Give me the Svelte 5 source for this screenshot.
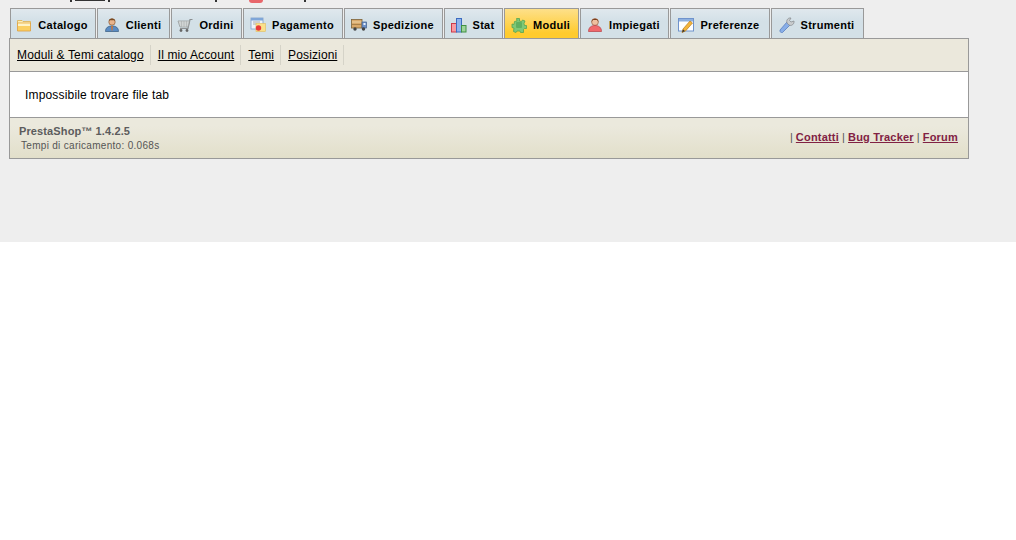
<script>
  const tabs = [
    { label: 'Catalogo', w: 86, icon: 'folder' },
    { label: 'Clienti', w: 73, icon: 'user' },
    { label: 'Ordini', w: 71, icon: 'cart' },
    { label: 'Pagamento', w: 100, icon: 'pay' },
    { label: 'Spedizione', w: 99, icon: 'truck' },
    { label: 'Stat', w: 59, icon: 'stat' },
    { label: 'Moduli', w: 75, icon: 'puzzle', active: true },
    { label: 'Impiegati', w: 89, icon: 'woman' },
    { label: 'Preferenze', w: 100, icon: 'pref' },
    { label: 'Strumenti', w: 93, icon: 'wrench' }
  ];
  const subs = ['Moduli & Temi catalogo', 'Il mio Account', 'Temi', 'Posizioni'];
</script>

<div class="page">
  <div class="sliver">
    <span class="mark one"></span>
    <span class="mark line"></span>
    <span class="mark four"></span>
    <span class="mark two"></span>
    <span class="dot"></span>
    <span class="mark three"></span>
  </div>
  <ul class="tabs">
    {#each tabs as t}
      <li class="tab" class:active={t.active} style="width:{t.w}px">
        <svg class="ico" viewBox="0 0 16 16" width="16" height="16">
          {#if t.icon === 'folder'}
            <path d="M1.500 3.500h4.500l1 1h7.500v2h-13z" fill="#fbeeb8" stroke="#dcae4c" stroke-width=".8"/>
            <path d="M1.500 6h13v8h-13z" fill="#fbd062" stroke="#e0a03c" stroke-width=".8"/>
            <path d="M2 6.500h12v2.500H2z" fill="#fef3c8"/>
          {:else if t.icon === 'user'}
            <circle cx="8" cy="5" r="3.200" fill="#e9b48c" stroke="#8a5a35" stroke-width=".7"/>
            <path d="M4.800 4C5.500 .8 10.500 .8 11.200 4L10 3.200H6z" fill="#7a4a22"/>
            <path d="M1.500 14.500c0-3.800 2.500-5.500 6.500-5.500s6.500 1.700 6.500 5.500z" fill="#5a8cc4" stroke="#33597f" stroke-width=".7"/>
            <path d="M7 9h2l-.5 4.500h-1z" fill="#c8743a"/>
          {:else if t.icon === 'cart'}
            <path d="M15.500 2.500h-2.500l-2 9H3" fill="none" stroke="#8c8f91" stroke-width="1.200"/>
            <path d="M1 4h11.500l-1.500 6H3z" fill="#dfe3e4" stroke="#8c9091" stroke-width=".7"/>
            <path d="M2 6h10M2.500 8h9M4.500 4v6M7 4v6M9.500 4v6" stroke="#a2a6a7" stroke-width=".5"/>
            <circle cx="4" cy="13.500" r="1.400" fill="#666"/>
            <circle cx="10" cy="13.500" r="1.400" fill="#666"/>
          {:else if t.icon === 'pay'}
            <rect x="1" y="1" width="12" height="11" fill="#eef3fa" stroke="#7f9ec8" stroke-width=".8"/>
            <rect x="1" y="1" width="12" height="2.500" fill="#7fa6d8"/>
            <path d="M3 5h7M3 7h3" stroke="#9a9a9a" stroke-width=".8"/>
            <rect x="6" y="6.500" width="9.500" height="8" fill="#fbe08a" stroke="#e2bd5a" stroke-width=".6"/>
            <circle cx="8.500" cy="11" r="2.700" fill="#e83a3a"/>
          {:else if t.icon === 'truck'}
            <rect x="0.500" y="2.500" width="10.500" height="8.500" fill="#d8a86a" stroke="#7d6238" stroke-width=".8"/>
            <path d="M1 5h9.500" stroke="#eccf9e" stroke-width="1.200"/>
            <path d="M1 7.500h9.500" stroke="#a98148" stroke-width="1"/>
            <rect x="11" y="5" width="4.500" height="6" fill="#6d91c8" stroke="#3f5e8e" stroke-width=".7"/>
            <rect x="12.500" y="6" width="2" height="2" fill="#e6f0fb"/>
            <circle cx="4" cy="12" r="1.700" fill="#444"/>
            <circle cx="12.500" cy="12" r="1.700" fill="#444"/>
          {:else if t.icon === 'stat'}
            <rect x="0.500" y="6.500" width="5" height="8.500" fill="#f79aa0" stroke="#cc3b4a"/>
            <rect x="5.500" y="1.500" width="5" height="13.500" fill="#8fb4ec" stroke="#3c6bc0"/>
            <rect x="10.500" y="8.500" width="4.500" height="6.500" fill="#9ed49a" stroke="#3f9044"/>
          {:else if t.icon === 'puzzle'}
            <path d="M5.500 1.500h3v2.500l2 .5 1-1.500 2.500 1-1 2.500 .5 2h2v3h-2l-1 1v3h-3l-.5-1.500h-3l-1 1.500-2.500-1 .5-3.500-2-.5v-3.500l2 .5 .5-3 2.500-.5z" fill="#7ec878" stroke="#56a552" stroke-width=".8"/>
            <rect x="5" y="5" width="6" height="6" rx="1" fill="#5fb061"/>
          {:else if t.icon === 'woman'}
            <circle cx="8" cy="5" r="3.400" fill="#efbfa0" stroke="#8a4a2c" stroke-width=".6"/>
            <path d="M4.500 5C4.500 .5 11.500 .5 11.500 5L10 3H6z" fill="#7b3f1d"/>
            <path d="M1.500 14.500c0-3.800 2.500-6 6.500-6s6.500 2.200 6.500 6z" fill="#f0686c" stroke="#b73f45" stroke-width=".7"/>
          {:else if t.icon === 'pref'}
            <rect x="0.500" y="1.500" width="15" height="12.500" fill="#fff" stroke="#6f93cc"/>
            <rect x="1" y="2" width="14" height="2.500" fill="#8db0e0"/>
            <path d="M4 15.500l1-3.500 7-8 2.500 2-7 8z" fill="#f4b63c" stroke="#b87a1d" stroke-width=".7"/>
            <path d="M4 15.500l1-3 2 1.500z" fill="#333"/>
          {:else if t.icon === 'wrench'}
            <path d="M1 13l7-8 3 3-7.500 7.500c-1 .8-3 -.5-2.500 -2.500z" fill="#88aee8" stroke="#587fc0" stroke-width=".8"/>
            <path d="M8 6C7 3 9 .5 12 1L10.500 3.500 12 5l3-1c.5 3-2.500 5.500-5 4z" fill="#c9ccce" stroke="#84888c" stroke-width=".7"/>
          {/if}
        </svg>
        <span>{t.label}</span>
      </li>
    {/each}
  </ul>

  <div class="panel">
    <nav class="sub">
      {#each subs as s}
        <a href="#top">{s}</a>
      {/each}
    </nav>
    <div class="content">Impossibile trovare file tab</div>
    <footer class="foot">
      <div class="ver">
        <strong>PrestaShop™ 1.4.2.5</strong>
        <small>Tempi di caricamento: 0.068s</small>
      </div>
      <div class="links">
        | <a href="#top">Contatti</a> | <a href="#top">Bug Tracker</a> | <a href="#top">Forum</a>
      </div>
    </footer>
  </div>
</div>

<style>
  :global(body) {
    margin: 0;
    background: #fff;
  }
  .page {
    height: 242px;
    box-sizing: border-box;
    background: #eeeeee;
    padding-left: 9px;
    width: 1016px;
    font-family: "Liberation Sans", Arial, sans-serif;
    overflow: hidden;
    position: relative;
  }
  .sliver {
    position: absolute;
    left: 0;
    top: 0;
    width: 100%;
    height: 3px;
  }
  .mark, .dot {
    position: absolute;
    top: 0;
    background: #333;
  }
  .mark.one { left: 70px; width: 2px; height: 2px; }
  .mark.line { left: 75px; width: 30px; height: 1px; }
  .mark.four { left: 108px; width: 2px; height: 2px; }
  .mark.two { left: 215px; width: 2px; height: 2px; }
  .dot { left: 249px; width: 14px; height: 3px; background: #e8666a; border-radius: 0 0 7px 7px; }
  .mark.three { left: 304px; width: 2px; height: 2px; }

  .tabs {
    list-style: none;
    margin: 0;
    padding: 8px 0 0 1px;
    display: flex;
    gap: 1px;
    height: 30px;
  }
  .tab {
    box-sizing: border-box;
    height: 31px;
    border: 1px solid #999;
    border-bottom: 0;
    background: linear-gradient(#e0e8ed, #d3e0e7 40%);
    display: flex;
    align-items: center;
    justify-content: center;
    padding: 2px 2px 0 0;
    gap: 6px;
    font-size: 11px;
    font-weight: bold;
    letter-spacing: 0.28px;
    color: #000;
    position: relative;
    z-index: 1;
  }
  .tab.active {
    background: linear-gradient(#fde08a, #ffcb2e 80%);
  }
  .ico {
    flex: none;
  }
  .panel {
    box-sizing: border-box;
    width: 960px;
    border: 1px solid #999;
    height: 121px;
    display: flex;
    flex-direction: column;
    position: relative;
    z-index: 2;
  }
  .sub {
    height: 32px;
    background: #ebe8dc;
    border-bottom: 1px solid #999;
    display: flex;
    align-items: center;
  }
  .sub a {
    font-size: 12px;
    letter-spacing: 0.13px;
    color: #000;
    padding: 0 6px 0 7px;
    line-height: 20px;
    border-right: 1px solid #d5d3c8;
  }
  .content {
    height: 46px;
    background: #fff;
    box-sizing: border-box;
    padding: 16px 15px 0;
    font-size: 12px;
    letter-spacing: 0.17px;
    color: #000;
    border-bottom: 1px solid #999;
  }
  .foot {
    flex: 1;
    background: linear-gradient(#ebe9dd, #ebe9dd 20%, #e2dfca);
    display: flex;
    justify-content: space-between;
    padding: 0 10px 0 9px;
  }
  .ver strong {
    display: block;
    font-size: 11px;
    letter-spacing: 0.12px;
    color: #5c5c5c;
    margin-top: 7px;
  }
  .ver small {
    display: block;
    font-size: 10px;
    letter-spacing: 0.3px;
    color: #555;
    margin: 3px 0 0 2px;
  }
  .links {
    font-size: 11px;
    color: #555;
    margin-top: 13px;
  }
  .links a {
    color: #812143;
    font-weight: bold;
    letter-spacing: 0.2px;
  }
</style>
